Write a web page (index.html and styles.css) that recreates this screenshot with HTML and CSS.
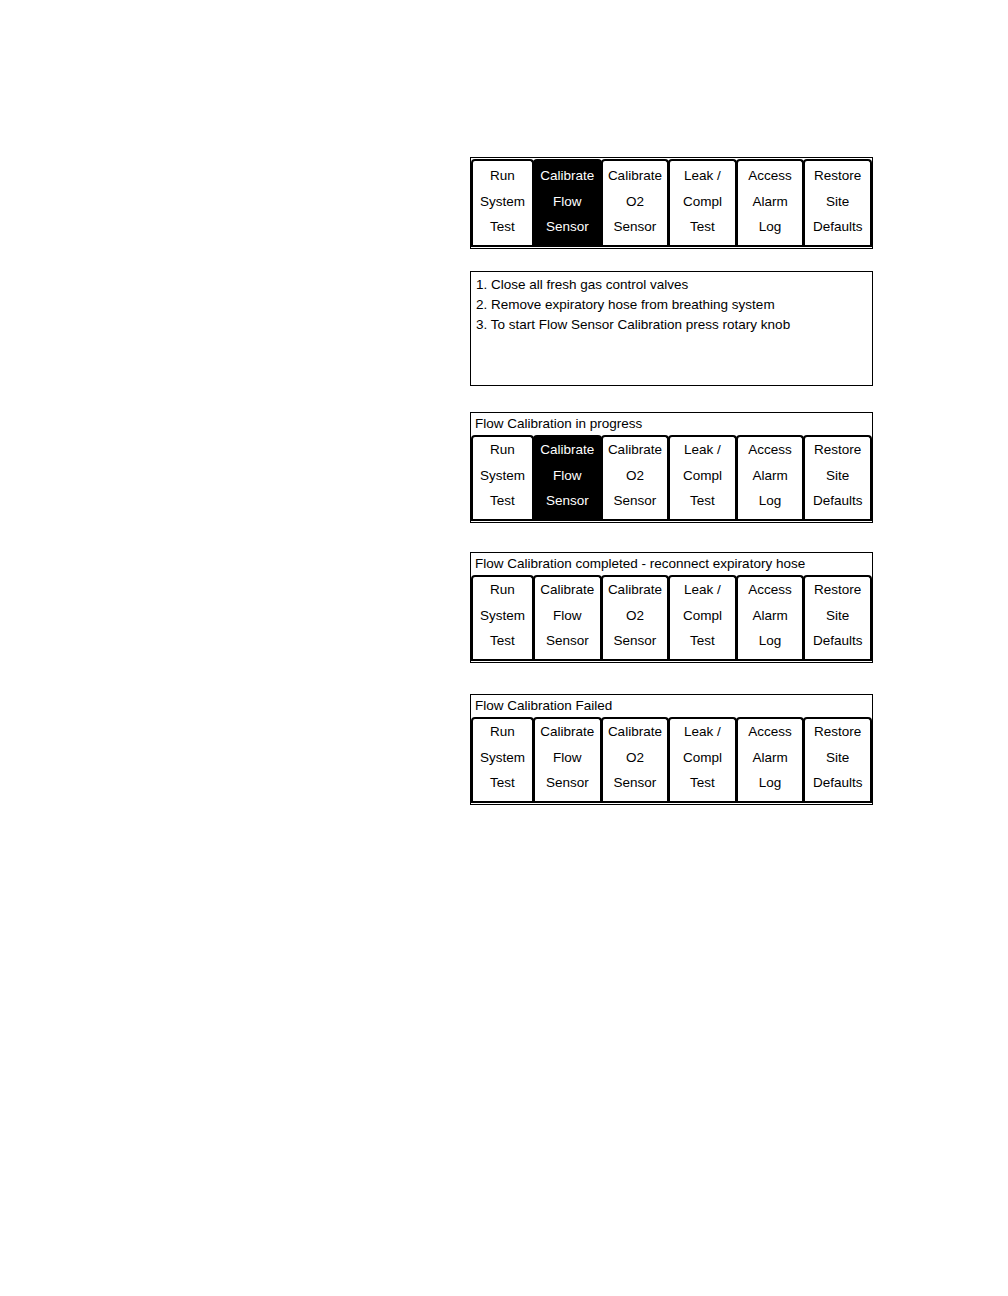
FILE: index.html
```html
<!DOCTYPE html>
<html lang="en">
<head>
  <meta charset="UTF-8">
  <meta name="viewport" content="width=device-width, initial-scale=1.0">
  <title>Flow Sensor Calibration</title>
  <link rel="stylesheet" href="styles.css">
</head>
<body>
  <div class="page">

    <div class="panel panel-1">
      <div class="tabs">
        <div class="tab">Run<br>System<br>Test</div>
        <div class="tab active">Calibrate<br>Flow<br>Sensor</div>
        <div class="tab">Calibrate<br>O2<br>Sensor</div>
        <div class="tab">Leak /<br>Compl<br>Test</div>
        <div class="tab">Access<br>Alarm<br>Log</div>
        <div class="tab">Restore<br>Site<br>Defaults</div>
      </div>
    </div>

    <div class="steps">
      <p>1. Close all fresh gas control valves</p>
      <p>2. Remove expiratory hose from breathing system</p>
      <p>3. To start Flow Sensor Calibration press rotary knob</p>
    </div>

    <div class="panel panel-3">
      <div class="status">Flow Calibration in progress</div>
      <div class="tabs">
        <div class="tab">Run<br>System<br>Test</div>
        <div class="tab active">Calibrate<br>Flow<br>Sensor</div>
        <div class="tab">Calibrate<br>O2<br>Sensor</div>
        <div class="tab">Leak /<br>Compl<br>Test</div>
        <div class="tab">Access<br>Alarm<br>Log</div>
        <div class="tab">Restore<br>Site<br>Defaults</div>
      </div>
    </div>

    <div class="panel panel-4">
      <div class="status">Flow Calibration completed - reconnect expiratory hose</div>
      <div class="tabs">
        <div class="tab">Run<br>System<br>Test</div>
        <div class="tab">Calibrate<br>Flow<br>Sensor</div>
        <div class="tab">Calibrate<br>O2<br>Sensor</div>
        <div class="tab">Leak /<br>Compl<br>Test</div>
        <div class="tab">Access<br>Alarm<br>Log</div>
        <div class="tab">Restore<br>Site<br>Defaults</div>
      </div>
    </div>

    <div class="panel panel-5">
      <div class="status">Flow Calibration Failed</div>
      <div class="tabs">
        <div class="tab">Run<br>System<br>Test</div>
        <div class="tab">Calibrate<br>Flow<br>Sensor</div>
        <div class="tab">Calibrate<br>O2<br>Sensor</div>
        <div class="tab">Leak /<br>Compl<br>Test</div>
        <div class="tab">Access<br>Alarm<br>Log</div>
        <div class="tab">Restore<br>Site<br>Defaults</div>
      </div>
    </div>

  </div>
</body>
</html>
```

FILE: styles.css
```css
* {
  margin: 0;
  padding: 0;
  box-sizing: border-box;
}
body {
  font-family: "Liberation Sans", Arial, sans-serif;
  font-size: 13.5px;
  color: #000;
  background: #fff;
}
.page {
  display: flex;
  flex-direction: column;
  width: 403px;
  margin-left: 470px;
  padding-top: 157px;
}
.panel {
  border: 1px solid #000;
  padding-bottom: 1px;
}
.panel-1 .tab {
  height: 86px;
  padding-top: 2px;
}
.panel-3 {
  margin-top: 26px;
}
.panel-4 {
  margin-top: 29px;
}
.panel-5 {
  margin-top: 31px;
}
.status {
  height: 21px;
  line-height: 21px;
  padding-left: 4px;
  white-space: nowrap;
}
.tabs {
  display: flex;
  padding-top: 1px;
  border-bottom: 2px solid #000;
}
.tab {
  flex: 1;
  height: 84px;
  padding-top: 0;
  line-height: 25.5px;
  text-align: center;
  white-space: nowrap;
  border: 2px solid #000;
  border-bottom: none;
  border-radius: 4px 4px 0 0;
  margin-right: -1px;
}
.tab:first-child {
  flex: 0 0 63px;
}
.tab:last-child {
  margin-right: 0;
}
.tab.active {
  background: #000;
  color: #fff;
}
.steps {
  margin-top: 22px;
  height: 115px;
  border: 1px solid #000;
  padding: 3px 5px;
  line-height: 20px;
}
```
